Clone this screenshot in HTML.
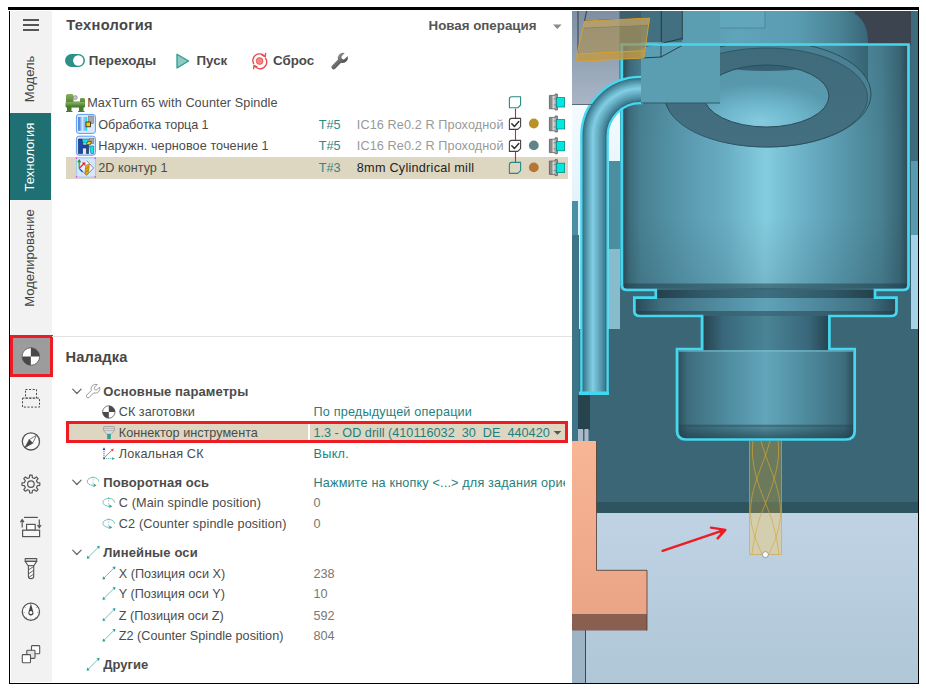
<!DOCTYPE html>
<html lang="ru">
<head>
<meta charset="utf-8">
<title>Технология</title>
<style>
*{box-sizing:border-box;margin:0;padding:0}
html,body{width:926px;height:689px;background:#fff;overflow:hidden}
body{font-family:"Liberation Sans",sans-serif;font-size:12px;color:#4b4b4b;position:relative}
.abs{position:absolute}
#topbar{left:8px;top:7px;width:911px;height:3px;background:#000}
#bl{left:9px;top:11px;width:1px;height:673px;background:#000}
#br{left:918px;top:10px;width:1px;height:674px;background:#000}
#bb{left:9px;top:683px;width:910px;height:1px;background:#000}
#side{left:11px;top:11px;width:41px;height:671px;background:#f2f2f2}
.vt{position:absolute;left:10px;width:42px;display:flex;align-items:center;justify-content:center}
.vt span{display:block;transform:rotate(-90deg);white-space:nowrap;font-size:12px;color:#444}
#tabact{left:10px;top:113px;width:40.5px;height:87px;background:#1f7073}
.t{position:absolute;white-space:nowrap;line-height:20px;height:20px}
.b{font-weight:bold}
.t i{color:transparent;font-style:normal}
.h14{font-size:14px;font-weight:bold;color:#3f3f3f}
.h13{font-size:13px;font-weight:bold;color:#4b4b4b}
.teal{color:#2a8a8a}
.gray{color:#999}
.num{color:#777}
.val{color:#1f7f80}
svg{position:absolute;overflow:visible}
.vtx{transform:translate(-50%,-50%) rotate(-90deg);white-space:nowrap;font-size:13px;color:#444;line-height:14px}
</style>
</head>
<body>
<!-- frame -->
<div class="abs" id="topbar"></div>
<div class="abs" id="bl"></div>
<div class="abs" id="br"></div>
<div class="abs" id="bb"></div>

<!-- SIDEBAR -->
<div class="abs" id="side"></div>
<div class="abs" id="tabact"></div>

<svg style="left:0;top:0" width="60" height="689" viewBox="0 0 60 689">
 <g fill="#555"><rect x="23" y="19" width="16" height="2"/><rect x="23" y="24" width="16" height="2"/><rect x="23" y="29" width="16" height="2"/></g>
</svg>
<div class="abs vtx" style="left:30px;top:78.7px">Модель</div>
<div class="abs vtx" style="left:30px;top:156.7px;color:#fff">Технология</div>
<div class="abs vtx" style="left:30px;top:258.3px">Моделирование</div>
<!-- active icon -->
<div class="abs" style="left:10px;top:335px;width:42.5px;height:42px;background:#9c9c9c;border:3px solid #ed1c24"></div>

<svg style="left:0;top:0" width="60" height="689" viewBox="0 0 60 689">
 <!-- active: target -->
 <circle cx="30.85" cy="356.5" r="8.8" fill="#fff" stroke="#555" stroke-width="0.8"/>
 <path d="M30.85 356.5 V347.7 A8.8 8.8 0 0 1 39.65 356.5Z M30.85 356.5 V365.3 A8.8 8.8 0 0 1 22.05 356.5Z" fill="#484848"/>
 <!-- dashed -->
 <g fill="none" stroke="#444" stroke-width="1" stroke-dasharray="2 1.6">
  <rect x="25.5" y="389.5" width="11" height="8.6"/>
  <rect x="22.5" y="398.1" width="17" height="9"/>
 </g>
 <!-- compass -->
 <circle cx="30.9" cy="441.4" r="8.6" fill="#fafafa" stroke="#555" stroke-width="1.3"/>
 <path d="M36.6 435.2 L32.6 443.2 L29.2 439.7Z" fill="#fff" stroke="#555" stroke-width="0.8" stroke-linejoin="round"/>
 <path d="M25.0 447.6 L29.2 439.7 L32.6 443.2Z" fill="#444" stroke="#444" stroke-width="0.8" stroke-linejoin="round"/>
 <!-- gear -->
 <path d="M29.70 475.18 L32.10 475.18 L32.44 477.68 L34.35 478.47 L36.36 476.95 L38.05 478.64 L36.53 480.65 L37.32 482.56 L39.82 482.90 L39.82 485.30 L37.32 485.64 L36.53 487.55 L38.05 489.56 L36.36 491.25 L34.35 489.73 L32.44 490.52 L32.10 493.02 L29.70 493.02 L29.36 490.52 L27.45 489.73 L25.44 491.25 L23.75 489.56 L25.27 487.55 L24.48 485.64 L21.98 485.30 L21.98 482.90 L24.48 482.56 L25.27 480.65 L23.75 478.64 L25.44 476.95 L27.45 478.47 L29.36 477.68Z" fill="none" stroke="#555" stroke-width="1.2" stroke-linejoin="round"/>
 <circle cx="30.9" cy="484.1" r="3.3" fill="none" stroke="#555" stroke-width="1.2"/>
 <!-- setup -->
 <g fill="none" stroke="#555" stroke-width="1.2">
  <path d="M24 517.4 H37.8"/>
  <path d="M22.2 527.6 V520 M20.4 522.2 L22.2 519.6 L24 522.2"/>
  <path d="M39.3 519.6 V527 M37.5 525 L39.3 527.6 L41.1 525"/>
  <rect x="26.6" y="524.4" width="8.6" height="5.8" fill="#fff"/>
  <rect x="22.6" y="530.2" width="17" height="6.4" fill="#f6f6f6"/>
 </g>
 <!-- mill -->
 <g fill="#f6f6f6" stroke="#555" stroke-width="1.1" stroke-linejoin="round">
  <path d="M25.2 558.6 H36.7 V561.4 H25.2Z"/>
  <path d="M25.2 561.4 H36.7 L33.8 565.8 H28.2Z"/>
  <path d="M28.4 565.8 H33.7 V576.4 Q33.7 578.6 31 578.6 Q28.4 578.6 28.4 576.4Z"/>
  <path d="M28.4 570 L33.7 566.4 M28.4 574 L33.7 570.2 M28.6 577.6 L33.7 574" fill="none" stroke-width="0.9"/>
 </g>
 <!-- gauge -->
 <circle cx="30.9" cy="611.7" r="8.6" fill="#fafafa" stroke="#555" stroke-width="1.3"/>
 <g fill="#999">
  <circle cx="25.2" cy="607.5" r="0.5"/><circle cx="36.6" cy="607.5" r="0.5"/><circle cx="24.2" cy="612.6" r="0.5"/><circle cx="37.6" cy="612.6" r="0.5"/><circle cx="26.2" cy="617.2" r="0.5"/><circle cx="35.6" cy="617.2" r="0.5"/><circle cx="30.9" cy="618.8" r="0.5"/>
 </g>
 <path d="M30.9 603.6 L33.3 612 A2.6 2.6 0 1 1 28.5 612Z" fill="#444"/>
 <circle cx="30.9" cy="612.6" r="1.5" fill="#fff"/>
 <!-- squares -->
 <g fill="#fff" stroke="#555" stroke-width="1.1">
  <rect x="31.5" y="645.6" width="8.2" height="8.2" rx="0.8"/>
  <rect x="26.8" y="650.2" width="8.2" height="8.2" rx="0.8" fill="#e4e4e4"/>
  <rect x="22.3" y="654.6" width="8.2" height="8.2" rx="0.8"/>
 </g>
</svg>



<!-- TOP PANEL -->
<div class="t b" style="left:66.3px;top:14.92px;font-size:14.67px;color:#474747;letter-spacing:0.3px;">Технология</div>
<div class="t b" style="left:428.5px;top:16.08px;font-size:13.33px;color:#555">Новая операция</div>
<div class="t b" style="left:88.8px;top:51.28px;font-size:13.33px;color:#4b4b4b">Переходы</div>
<div class="t b" style="left:196.5px;top:51.28px;font-size:13.33px;color:#4b4b4b">Пуск</div>
<div class="t b" style="left:273px;top:51.28px;font-size:13.33px;color:#4b4b4b">Сброс</div>
<div class="abs" style="left:65.5px;top:157px;width:502px;height:21.6px;background:#ddd6c0"></div>
<div class="t " style="left:87.2px;top:92.91px;font-size:12.67px;letter-spacing:0.1px;">MaxTurn 65 with Counter Spindle</div>
<div class="t " style="left:98.3px;top:114.61px;font-size:12.67px;letter-spacing:-0.1px;">Обработка торца 1</div>
<div class="t " style="left:98.3px;top:136.11px;font-size:12.67px;letter-spacing:0.07px;">Наружн. черновое точение 1</div>
<div class="t " style="left:98.3px;top:158.11px;font-size:12.67px;">2D контур 1</div>
<div class="t teal" style="left:318.8px;top:114.61px;font-size:12.67px;">T#5</div>
<div class="t teal" style="left:318.8px;top:136.11px;font-size:12.67px;">T#5</div>
<div class="t teal" style="left:318.8px;top:158.11px;font-size:12.67px;">T#3</div>
<div class="t gray" style="left:356.8px;top:114.61px;font-size:12.67px;letter-spacing:0.1px;">IC16 Re0.2 R Проходной</div>
<div class="t gray" style="left:356.8px;top:136.11px;font-size:12.67px;letter-spacing:0.1px;">IC16 Re0.2 R Проходной</div>
<div class="t " style="left:356.8px;top:158.11px;font-size:12.67px;color:#222;letter-spacing:0.25px;">8mm Cylindrical mill</div>
<svg style="left:0;top:0" width="572" height="200" viewBox="0 0 572 200">
<defs>
 <linearGradient id="gcyl" x1="0" y1="0" x2="1" y2="0"><stop offset="0" stop-color="#2a6ad0"/><stop offset="0.6" stop-color="#cfe6ff"/><stop offset="1" stop-color="#7ab0f0"/></linearGradient>
 <linearGradient id="ggrn" x1="0" y1="0" x2="0" y2="1"><stop offset="0" stop-color="#86b45c"/><stop offset="1" stop-color="#3f6e28"/></linearGradient>
 <linearGradient id="gchk" x1="0" y1="0" x2="1" y2="0"><stop offset="0" stop-color="#707070"/><stop offset="0.5" stop-color="#d8d8d8"/><stop offset="1" stop-color="#808080"/></linearGradient>
</defs>
<!-- toggle -->
<rect x="65" y="54" width="20" height="13" rx="6.5" fill="#2a9088"/>
<circle cx="78.3" cy="60.5" r="5.2" fill="#fff"/>
<!-- play -->
<path d="M177 54.2 L188.6 61 L177 68Z" fill="#8ccac2" stroke="#2f9a90" stroke-width="1.3" stroke-linejoin="round"/>
<!-- reset -->
<g fill="none" stroke="#ea4a4a" stroke-width="1.4" stroke-linecap="round">
 <path d="M253.6 63.5 A6.6 6.6 0 0 1 264.5 56.2"/>
 <path d="M265.6 58.4 A6.6 6.6 0 0 1 254.6 65.8"/>
 <path d="M262.2 55.2 L265.2 56.6 L265.6 53.4"/>
 <path d="M257 66.9 L254 65.5 L253.6 68.6"/>
</g>
<circle cx="259.6" cy="61" r="3.4" fill="#f08a8a" stroke="#ea4a4a" stroke-width="0.8"/>
<!-- wrench -->
<g transform="translate(342.8 57.9) rotate(45)">
 <linearGradient id="gwr" x1="0" y1="0" x2="1" y2="0"><stop offset="0" stop-color="#8c8c8c"/><stop offset="1" stop-color="#4c4c4c"/></linearGradient>
 <path d="M-2.1 -4.8 A5.3 5.3 0 0 0 -2.2 4.6 L-2.2 13 A2.2 2.2 0 0 0 2.2 13 L2.2 4.6 A5.3 5.3 0 0 0 2.1 -4.8 L2.1 -1 A2.1 2.1 0 0 1 -2.1 -1Z" fill="url(#gwr)"/>
</g>
<!-- dropdown arrow -->
<path d="M553 24.5 H561.6 L557.3 29Z" fill="#8a8a8a"/>
<!-- machine icon -->
<g>
 <path d="M66 101 V95.5 Q66 94 68 94 H72 Q73.5 94 73.5 96 V101.5 H80 V99 Q80 98 81.5 98 H83.5 Q85 98 85 99.5 V107 H66Z" fill="url(#ggrn)"/>
 <rect x="65.5" y="102" width="19.5" height="5.5" rx="1" fill="url(#ggrn)"/>
 <path d="M67 107 H71.5 V111 H72.5 V112 H66 V111 H67Z M79 107 H83.5 V111 H84.5 V112 H78 V111 H79Z" fill="#4a7a30"/>
 <circle cx="75.3" cy="97.6" r="2" fill="#c8c8c8" stroke="#777" stroke-width="0.6"/>
</g>
<!-- op icon 1 -->
<rect x="76.4" y="114.4" width="19" height="19" rx="2.5" fill="#dbe9ff" stroke="#5a9cf8" stroke-width="1"/>
<rect x="78.2" y="117" width="7" height="13.8" fill="url(#gcyl)"/>
<rect x="85.2" y="117" width="2" height="13.8" fill="#18e0e8"/>
<rect x="88.4" y="116" width="5" height="7.6" fill="#a8a8a8" stroke="#666" stroke-width="0.5"/>
<rect x="86" y="122" width="4.4" height="4.8" fill="#ffcc00" stroke="#222" stroke-width="0.8"/>
<!-- op icon 2 -->
<rect x="76.4" y="136.2" width="19" height="19" rx="2.5" fill="#dbe9ff" stroke="#5a9cf8" stroke-width="1"/>
<path d="M78.4 139 H82 L83 145 H88.5 V153.6 H86.5 V148 H82.5 V153.6 H78.4Z" fill="#1848b0" stroke="#0a1e50" stroke-width="0.6"/>
<path d="M82 139 H88.8 L87.4 143 H83Z M89.5 146 H93.6 V153.6 H91Z" fill="#18e0e8" stroke="#0a5060" stroke-width="0.5"/>
<rect x="89.4" y="138.4" width="4.4" height="5" fill="#a8a8a8" stroke="#666" stroke-width="0.5"/>
<path d="M86.6 143.4 L88.2 141.4 H91.4 L90.4 144.6 H86.6Z" fill="#ffcc00" stroke="#222" stroke-width="0.6"/>
<!-- op icon 3 -->
<rect x="76.4" y="158" width="19" height="19" fill="#d6e6fa" stroke="#9ec4f4" stroke-width="0.8"/>
<g fill="#ff30ff"><rect x="75.8" y="157.4" width="1.4" height="1.4"/><rect x="94.6" y="157.4" width="1.4" height="1.4"/><rect x="75.8" y="176.2" width="1.4" height="1.4"/><rect x="94.6" y="176.2" width="1.4" height="1.4"/></g>
<path d="M86.6 160.6 L93.6 168 L86.6 175.4 L81.4 170" fill="#eef4fc" stroke="#666" stroke-width="0.7"/>
<path d="M79.2 168.4 V160.4 M77.8 162.2 L79.2 160 L80.6 162.2" fill="none" stroke="#18a020" stroke-width="1.1"/>
<path d="M79.4 168.2 L84.6 163 M82.4 163 H84.8 V165.4" fill="none" stroke="#e82020" stroke-width="1.1"/>
<path d="M79.4 168.6 L82.6 172" fill="none" stroke="#2040e0" stroke-width="1.2"/>
<path d="M85.6 165.4 L89.4 164 L88.6 173 L86.6 175 L84.8 173.4Z" fill="#e0a818" stroke="#8a6410" stroke-width="0.5"/>
<path d="M85.4 169 L88.8 167 M85.2 172 L88.6 170" stroke="#8a6410" stroke-width="0.6"/>
<!-- red dashes -->
<path d="M515.5 108.6 V118 M515.5 130 V140.2 M515.5 151.8 V162" stroke="#f01818" stroke-width="1.1"/>
<!-- boxes -->
<g fill="#fff" stroke-width="1.1" stroke-linejoin="round">
 <path d="M511.6 96.8 H520.6 V105 L517.8 107.8 H509.4 V99 Q509.4 96.8 511.6 96.8Z" stroke="#2a8888"/>
 <path d="M511.6 118.4 H520.6 V126.6 L517.8 129.4 H509.4 V120.6 Q509.4 118.4 511.6 118.4Z" stroke="#444"/>
 <path d="M511.6 140.4 H520.6 V148.6 L517.8 151.4 H509.4 V142.6 Q509.4 140.4 511.6 140.4Z" stroke="#444"/>
 <path d="M511.6 162.4 H520.6 V170.6 L517.8 173.4 H509.4 V164.6 Q509.4 162.4 511.6 162.4Z" stroke="#2a8888" fill="#ddd6c0"/>
</g>
<g fill="none" stroke="#333" stroke-width="1.5" stroke-linecap="round" stroke-linejoin="round">
 <path d="M511.8 123.8 L514.4 126.4 L518.8 121.6"/>
 <path d="M511.8 145.8 L514.4 148.4 L518.8 143.6"/>
</g>
<!-- dots -->
<circle cx="533.8" cy="123.5" r="4.9" fill="#ba9028"/>
<circle cx="533.8" cy="145.4" r="4.9" fill="#5f8686"/>
<circle cx="533.8" cy="167.4" r="4.9" fill="#b87636"/>
<!-- chuck icons -->
<g id="chk">
 <path d="M549.4 95.4 H555 V94 H557.4 V110 H555 V108.8 H549.4Z" fill="url(#gchk)" stroke="#555" stroke-width="0.7"/>
 <path d="M551.8 95.4 V108.8 M553.6 99 H557 M553.6 105 H557" stroke="#666" stroke-width="0.6" fill="none"/>
 <rect x="556.4" y="97.6" width="8.2" height="9.4" fill="#00e8e0" stroke="#0a8a88" stroke-width="0.8"/>
</g>
<use href="#chk" y="22"/><use href="#chk" y="43.8"/><use href="#chk" y="65.6"/>
</svg>



<!-- BOTTOM PANEL -->
<div class="abs" style="left:52px;top:336px;width:520px;height:1px;background:#e2e2e2"></div>
<div class="t b" style="left:65.5px;top:347.32px;font-size:14.67px;color:#474747;letter-spacing:0.15px;">Наладка</div>
<div class="abs" style="left:65.7px;top:421px;width:502px;height:21.5px;background:#ddd6c0;border:3px solid #ed1c24"></div>
<div class="abs" style="left:308px;top:424px;width:2px;height:15.5px;background:#fff"></div>
<div class="t b" style="left:103.3px;top:381.50px;font-size:13px;letter-spacing:0.1px;">Основные параметры</div>
<div class="t " style="left:118.8px;top:402.41px;font-size:12.67px;">СК заготовки</div>
<div class="t " style="left:118.8px;top:422.91px;font-size:12.67px;">Коннектор инструмента</div>
<div class="t " style="left:118.8px;top:444.01px;font-size:12.67px;letter-spacing:0.15px;">Локальная СК</div>
<div class="t b" style="left:103.3px;top:472.50px;font-size:13px;letter-spacing:0.12px;">Поворотная ось</div>
<div class="t " style="left:118.8px;top:493.01px;font-size:12.67px;letter-spacing:0.12px;">C (Main spindle position)</div>
<div class="t " style="left:118.8px;top:514.11px;font-size:12.67px;letter-spacing:0.13px;">C2 (Counter spindle position)</div>
<div class="t b" style="left:103.3px;top:542.50px;font-size:13px;letter-spacing:0.13px;">Линейные оси</div>
<div class="t " style="left:118.8px;top:564.11px;font-size:12.67px;">X (Позиция оси X)</div>
<div class="t " style="left:118.8px;top:584.41px;font-size:12.67px;">Y (Позиция оси Y)</div>
<div class="t " style="left:118.8px;top:605.61px;font-size:12.67px;">Z (Позиция оси Z)</div>
<div class="t " style="left:118.8px;top:626.31px;font-size:12.67px;">Z2 (Counter Spindle position)</div>
<div class="t b" style="left:103.3px;top:655.00px;font-size:13px;">Другие</div>
<div class="t val" style="left:313.5px;top:402.41px;font-size:12.67px;letter-spacing:0.17px;">По предыдущей операции</div>
<div class="t val" style="left:313.5px;top:422.91px;font-size:12.67px;">1.3 - OD drill (410116032<i>_</i>30<i>_</i>DE<i>_</i>440420</div>
<div class="t val" style="left:313.5px;top:444.01px;font-size:12.67px;letter-spacing:0.3px;">Выкл.</div>
<div class="t val" style="left:313.5px;top:472.61px;font-size:12.67px;width:251px;overflow:hidden;letter-spacing:0.16px">Нажмите на кнопку &lt;...&gt; для задания ориентации</div>
<div class="t num" style="left:313.5px;top:493.01px;font-size:12.67px;">0</div>
<div class="t num" style="left:313.5px;top:514.11px;font-size:12.67px;">0</div>
<div class="t num" style="left:313.5px;top:564.11px;font-size:12.67px;">238</div>
<div class="t num" style="left:313.5px;top:584.41px;font-size:12.67px;">10</div>
<div class="t num" style="left:313.5px;top:605.61px;font-size:12.67px;">592</div>
<div class="t num" style="left:313.5px;top:626.31px;font-size:12.67px;">804</div>
<svg style="left:0;top:330px" width="572" height="353" viewBox="0 330 572 353">
<path d="M72.7 389.2 L76.9 393.5 L81.10000000000001 389.2" fill="none" stroke="#666" stroke-width="1.2" stroke-linecap="round" stroke-linejoin="round"/>
<path d="M72.7 480.2 L76.9 484.5 L81.10000000000001 480.2" fill="none" stroke="#666" stroke-width="1.2" stroke-linecap="round" stroke-linejoin="round"/>
<path d="M72.7 550.2 L76.9 554.5 L81.10000000000001 550.2" fill="none" stroke="#666" stroke-width="1.2" stroke-linecap="round" stroke-linejoin="round"/>
<g transform="translate(95.4 388.8) rotate(45)">
 <path d="M-1.8 -4.2 A4.6 4.6 0 0 0 -1.7 4.1 L-1.7 10.4 A1.7 1.7 0 0 0 1.7 10.4 L1.7 4.1 A4.6 4.6 0 0 0 1.8 -4.2 L1.8 -0.8 A1.8 1.8 0 0 1 -1.8 -0.8Z" fill="#fff" stroke="#8a8a8a" stroke-width="0.8"/>
</g>
<circle cx="108.8" cy="412" r="6.2" fill="#fff" stroke="#555" stroke-width="0.8"/>
<path d="M108.8 412 V405.8 A6.2 6.2 0 0 1 115 412Z M108.8 412 V418.2 A6.2 6.2 0 0 1 102.6 412Z" fill="#4a4a4a"/>
<path d="M104 426.6 H113.8 Q114.4 426.6 114.4 427.4 V430 Q114.4 431.4 112.6 432.6 L111 434.2 H107 L105.4 432.6 Q103.6 431.4 103.6 430 V427.4 Q103.6 426.6 104 426.6Z" fill="#dcdcdc" stroke="#8c8c8c" stroke-width="0.7"/>
<path d="M104 428.6 H114 M104.4 430.6 H113.6" stroke="#9a9a9a" stroke-width="0.6"/>
<rect x="107.2" y="434" width="3.6" height="5.2" fill="#2aa098"/>
<g fill="none" stroke-width="0.8">
 <path d="M104 458 V449.4" stroke="#2030e0" stroke-dasharray="1.2 0.8"/>
 <path d="M102.6 450 L104 447.2 L105.4 450Z" fill="#2030e0" stroke="none"/>
 <path d="M104.6 457.4 L112.4 449.8" stroke="#f04030"/>
 <path d="M113.8 448.4 L112.8 451.4 L110.8 449.4Z" fill="#f04030" stroke="none"/>
 <path d="M104 458.6 H112" stroke="#3aa4a0" stroke-dasharray="1.2 0.8"/>
 <path d="M114.8 458.6 L112 457.2 V460Z" fill="#3aa4a0" stroke="none"/>
 <rect x="103.2" y="457.6" width="1.6" height="1.6" fill="#444" stroke="none"/>
</g>
<path d="M553.6 431 H561.4 L557.5 434.8Z" fill="#555"/>
<g transform="translate(93 481.4)" fill="none" stroke="#62bcb8" stroke-width="0.9">
 <path d="M0 -5.2 V6.2" stroke-dasharray="1.5 1.5" stroke="#bcbcbc" stroke-width="1"/>
 <path d="M5.8 0.3 A5.8 3.9 0 1 0 0 3.9"/>
 <path d="M0.6 2.2 L3.6 4 L0.6 5.6Z" fill="#2aa39d" stroke="none"/>
</g>
<g transform="translate(108.7 502.3)" fill="none" stroke="#62bcb8" stroke-width="0.9">
 <path d="M0 -5.2 V6.2" stroke-dasharray="1.5 1.5" stroke="#bcbcbc" stroke-width="1"/>
 <path d="M5.8 0.3 A5.8 3.9 0 1 0 0 3.9"/>
 <path d="M0.6 2.2 L3.6 4 L0.6 5.6Z" fill="#2aa39d" stroke="none"/>
</g>
<g transform="translate(108.7 523.4)" fill="none" stroke="#62bcb8" stroke-width="0.9">
 <path d="M0 -5.2 V6.2" stroke-dasharray="1.5 1.5" stroke="#bcbcbc" stroke-width="1"/>
 <path d="M5.8 0.3 A5.8 3.9 0 1 0 0 3.9"/>
 <path d="M0.6 2.2 L3.6 4 L0.6 5.6Z" fill="#2aa39d" stroke="none"/>
</g>
<g transform="translate(93.3 552.3)">
 <path d="M-5 5 L5 -5" stroke="#62bcb8" stroke-width="0.9" fill="none"/>
 <path d="M6.5 -6.5 L5.9 -3.3 L3.3 -5.9Z M-6.5 6.5 L-5.9 3.3 L-3.3 5.9Z" fill="#2aa39d"/>
</g>
<g transform="translate(109 573)">
 <path d="M-5 5 L5 -5" stroke="#62bcb8" stroke-width="0.9" fill="none"/>
 <path d="M6.5 -6.5 L5.9 -3.3 L3.3 -5.9Z M-6.5 6.5 L-5.9 3.3 L-3.3 5.9Z" fill="#2aa39d"/>
</g>
<g transform="translate(109 593.4)">
 <path d="M-5 5 L5 -5" stroke="#62bcb8" stroke-width="0.9" fill="none"/>
 <path d="M6.5 -6.5 L5.9 -3.3 L3.3 -5.9Z M-6.5 6.5 L-5.9 3.3 L-3.3 5.9Z" fill="#2aa39d"/>
</g>
<g transform="translate(109 614.6)">
 <path d="M-5 5 L5 -5" stroke="#62bcb8" stroke-width="0.9" fill="none"/>
 <path d="M6.5 -6.5 L5.9 -3.3 L3.3 -5.9Z M-6.5 6.5 L-5.9 3.3 L-3.3 5.9Z" fill="#2aa39d"/>
</g>
<g transform="translate(109 635.3)">
 <path d="M-5 5 L5 -5" stroke="#62bcb8" stroke-width="0.9" fill="none"/>
 <path d="M6.5 -6.5 L5.9 -3.3 L3.3 -5.9Z M-6.5 6.5 L-5.9 3.3 L-3.3 5.9Z" fill="#2aa39d"/>
</g>
<g transform="translate(93.1 664.3)">
 <path d="M-5 5 L5 -5" stroke="#62bcb8" stroke-width="0.9" fill="none"/>
 <path d="M6.5 -6.5 L5.9 -3.3 L3.3 -5.9Z M-6.5 6.5 L-5.9 3.3 L-3.3 5.9Z" fill="#2aa39d"/>
</g>
</svg>



<!-- 3D VIEW -->
<svg style="left:572px;top:11px" width="346" height="672" viewBox="572 11 346 672">
<defs>
 <clipPath id="cv"><rect x="572" y="11" width="346" height="672"/></clipPath>
 <linearGradient id="gBody" gradientUnits="userSpaceOnUse" x1="624" y1="0" x2="907" y2="0">
  <stop offset="0" stop-color="#2d505d"/><stop offset="0.02" stop-color="#3d6c7c"/><stop offset="0.06" stop-color="#488091"/><stop offset="0.2" stop-color="#5797ac"/>
  <stop offset="0.36" stop-color="#69adc3"/><stop offset="0.5" stop-color="#84ccdf"/><stop offset="0.63" stop-color="#6db2c8"/>
  <stop offset="0.78" stop-color="#5797ac"/><stop offset="0.91" stop-color="#488091"/><stop offset="0.975" stop-color="#3a6777"/><stop offset="1" stop-color="#2d4f5b"/>
 </linearGradient>
 <linearGradient id="gNose" gradientUnits="userSpaceOnUse" x1="679" y1="0" x2="853" y2="0">
  <stop offset="0" stop-color="#2d515e"/><stop offset="0.05" stop-color="#3d6d7d"/><stop offset="0.28" stop-color="#4f8c9f"/>
  <stop offset="0.5" stop-color="#62a6bb"/><stop offset="0.72" stop-color="#4f8c9f"/><stop offset="0.95" stop-color="#3d6d7d"/><stop offset="1" stop-color="#2d515e"/>
 </linearGradient>
 <linearGradient id="gRim" x1="0" y1="0" x2="0" y2="1"><stop offset="0" stop-color="#1e3a44" stop-opacity="0.15"/><stop offset="1" stop-color="#1e3a44" stop-opacity="0.7"/></linearGradient>
 <linearGradient id="gNeck" gradientUnits="userSpaceOnUse" x1="704" y1="0" x2="828" y2="0">
  <stop offset="0" stop-color="#264550"/><stop offset="0.15" stop-color="#38667a"/><stop offset="0.5" stop-color="#4a8496"/>
  <stop offset="0.85" stop-color="#38667a"/><stop offset="1" stop-color="#264550"/>
 </linearGradient>
 <linearGradient id="gGroove" gradientUnits="userSpaceOnUse" x1="657" y1="0" x2="874" y2="0">
  <stop offset="0" stop-color="#22404a"/><stop offset="0.2" stop-color="#305867"/><stop offset="0.5" stop-color="#3d6f80"/>
  <stop offset="0.8" stop-color="#305867"/><stop offset="1" stop-color="#22404a"/>
 </linearGradient>
 <linearGradient id="gFlange" gradientUnits="userSpaceOnUse" x1="636" y1="0" x2="895" y2="0">
  <stop offset="0" stop-color="#2a4b58"/><stop offset="0.1" stop-color="#3f6f80"/><stop offset="0.5" stop-color="#5fa2b8"/>
  <stop offset="0.9" stop-color="#3f6f80"/><stop offset="1" stop-color="#2a4b58"/>
 </linearGradient>
 <linearGradient id="gPipe" gradientUnits="userSpaceOnUse" x1="581" y1="0" x2="607" y2="0">
  <stop offset="0" stop-color="#2a5e6e"/><stop offset="0.2" stop-color="#4a90a5"/><stop offset="0.5" stop-color="#80cce2"/>
  <stop offset="0.8" stop-color="#4a90a5"/><stop offset="1" stop-color="#2a5e6e"/>
 </linearGradient>
 <linearGradient id="gBg" x1="0" y1="0" x2="0" y2="1">
  <stop offset="0" stop-color="#c0d3e5"/><stop offset="1" stop-color="#afc7d7"/>
 </linearGradient>
 <linearGradient id="gGrayTL" x1="0" y1="0" x2="0" y2="1">
  <stop offset="0" stop-color="#7e8fa2"/><stop offset="1" stop-color="#a9b6c6"/>
 </linearGradient>
 <linearGradient id="gWhiteTL" x1="0" y1="0" x2="0" y2="1">
  <stop offset="0" stop-color="#f4fbff"/><stop offset="1" stop-color="#cfe6f4"/>
 </linearGradient>
 <linearGradient id="gSalmon" x1="0" y1="0" x2="0" y2="1">
  <stop offset="0" stop-color="#f8b696"/><stop offset="1" stop-color="#eaa486"/>
 </linearGradient>
 <radialGradient id="gHole" gradientUnits="userSpaceOnUse" cx="760" cy="122" r="78" gradientTransform="translate(0 61) scale(1 0.5)">
  <stop offset="0" stop-color="#86cee2"/><stop offset="0.5" stop-color="#70b9cf"/><stop offset="1" stop-color="#5a9db2"/>
 </radialGradient>
 <linearGradient id="gUpper" gradientUnits="userSpaceOnUse" x1="666" y1="0" x2="868" y2="0">
  <stop offset="0" stop-color="#5596ab"/><stop offset="0.35" stop-color="#60a4b9"/><stop offset="0.65" stop-color="#5a9cb1"/><stop offset="0.85" stop-color="#4a8496"/><stop offset="1" stop-color="#386676"/>
 </linearGradient>
 <linearGradient id="gBodyV" x1="0" y1="0" x2="0" y2="1"><stop offset="0" stop-color="#1e3a44" stop-opacity="0.08"/><stop offset="0.4" stop-color="#1e3a44" stop-opacity="0"/><stop offset="0.7" stop-color="#1e3a44" stop-opacity="0"/><stop offset="1" stop-color="#1e3a44" stop-opacity="0.14"/></linearGradient>
 <clipPath id="cBody"><rect x="624" y="46" width="283" height="242"/></clipPath>
</defs>
<g clip-path="url(#cv)">
 <!-- backgrounds -->
 <rect x="572" y="11" width="346" height="672" fill="#3a6676"/>
 <rect x="572" y="11" width="48" height="94" fill="url(#gGrayTL)"/>
 <rect x="572" y="105" width="48" height="224" fill="url(#gWhiteTL)"/>
 <rect x="619.5" y="11" width="22" height="68" fill="#3d5f6e"/>
 <!-- top-right dark -->
 <rect x="855" y="11" width="56" height="34" fill="#3c4450"/>
 <rect x="911" y="11" width="7" height="150" fill="#3c6c7c"/>
 <rect x="911" y="161" width="7" height="74" fill="#5a9ab0"/>
 <rect x="911" y="235" width="7" height="94" fill="#a4d2e6"/>
 <!-- left strips -->
 <rect x="609" y="161" width="11" height="88" fill="#4a8ea0"/>
 <rect x="609" y="249" width="11" height="80" fill="#86bccc"/>
 <rect x="572" y="201" width="6" height="34" fill="#4a90a2"/><rect x="572" y="235" width="7" height="206" fill="#3d7488"/>
 <!-- lower bg -->
 <rect x="572" y="502" width="346" height="11" fill="#2e5460"/>
 <rect x="572" y="513" width="346" height="170" fill="url(#gBg)"/>
 <rect x="572" y="630" width="13.5" height="53" fill="#9db3c6"/>
 <rect x="585" y="630" width="1" height="53" fill="#3a4a55"/>
  <!-- upper cyl above line -->
 <path d="M700 11 H846 Q868 15 868 43 V46 H700Z" fill="url(#gUpper)"/>
 <rect x="720" y="11" width="45" height="17" fill="#62a6bb"/>
 <path d="M720 28 H765 V11" fill="none" stroke="#4a8295" stroke-width="0.8"/>
 <!-- main body -->
 <rect x="624" y="46" width="283" height="242" fill="url(#gBody)"/>
 <g clip-path="url(#cBody)">
  <!-- upper cylinder -->
  <path d="M666 11 H845 Q868 14 868 42 V100 H666Z" fill="url(#gUpper)"/>
  <!-- ring -->
  <ellipse cx="767.5" cy="94" rx="103.5" ry="53" fill="#4c8598" stroke="#25424d" stroke-width="0.8"/>
  <ellipse cx="766.5" cy="97.5" rx="101" ry="49.5" fill="#436f80" stroke="#2a4a56" stroke-width="0.7"/>
  <ellipse cx="766.5" cy="96" rx="62.5" ry="31" fill="url(#gHole)" stroke="#2a4a56" stroke-width="1"/>
  <path d="M735 69.2 A62.5 31 0 0 1 798 69.2 A42 5 0 0 1 735 69.2Z" fill="#2f5564" opacity="0.8"/>
 </g>
 <rect x="624" y="46" width="283" height="242" fill="url(#gBodyV)"/>
 <!-- body bottom rim -->
 <rect x="624" y="283.5" width="283" height="4.5" fill="#1e3a44" opacity="0.5"/>
 <!-- groove -->
 <rect x="657" y="290" width="217" height="8" fill="url(#gGroove)"/>
 <!-- flange -->
 <rect x="636" y="298" width="259" height="18" fill="url(#gFlange)"/>
 <rect x="636" y="311" width="259" height="5" fill="#1e3a44" opacity="0.5"/>
 <!-- neck -->
 <rect x="704" y="316" width="124" height="34" fill="url(#gNeck)"/>
 <!-- nose -->
 <path d="M679 350 H853 V431 Q853 439 845 439 H687 Q679 439 679 431Z" fill="url(#gNose)"/>
 <path d="M679 424 H853 V431 Q853 439 845 439 H687 Q679 439 679 431Z" fill="url(#gRim)"/>
 <path d="M679 426 H853" stroke="#284a56" stroke-width="0.8"/>
 <rect x="679" y="350" width="174" height="2" fill="#7cc0d4" opacity="0.5"/>
 <!-- outline -->
 <path d="M621.7 44.5 H908.5 V285 Q908.5 290 903 290 H875 V297.6 H896.5 V311 Q896.5 316 891 316 H829.4 V349 H854.7 V431 Q854.7 439.5 846 439.5 H686 Q677 439.5 677 431 V349 H702 V316 H640 Q634.3 316 634.3 311 V297.6 H655.8 V290 H627 Q621.7 290 621.7 285Z" fill="none" stroke="#46d6ee" stroke-width="2.7" stroke-linejoin="miter"/>
 <!-- pipe -->
 <path d="M594.5 392 V136 A46 46 0 0 1 640.5 90 H643" fill="none" stroke="#48d8f0" stroke-width="28.6"/>
 <path d="M594.5 392 V136 A46.0 46.0 0 0 1 640.5 90.0 H643" fill="none" stroke="rgb(52, 112, 132)" stroke-width="24.0"/>
 <path d="M594.3222222222222 392 V136 A46.17777777777778 46.17777777777778 0 0 1 640.5 89.82222222222222 H643" fill="none" stroke="rgb(64, 126, 147)" stroke-width="21.6"/>
 <path d="M594.1444444444444 392 V136 A46.355555555555554 46.355555555555554 0 0 1 640.5 89.64444444444445 H643" fill="none" stroke="rgb(73, 138, 158)" stroke-width="19.1"/>
 <path d="M593.9666666666667 392 V136 A46.53333333333333 46.53333333333333 0 0 1 640.5 89.46666666666667 H643" fill="none" stroke="rgb(82, 148, 169)" stroke-width="16.7"/>
 <path d="M593.7888888888889 392 V136 A46.71111111111111 46.71111111111111 0 0 1 640.5 89.28888888888889 H643" fill="none" stroke="rgb(90, 158, 179)" stroke-width="14.2"/>
 <path d="M593.6111111111111 392 V136 A46.888888888888886 46.888888888888886 0 0 1 640.5 89.11111111111111 H643" fill="none" stroke="rgb(98, 168, 189)" stroke-width="11.8"/>
 <path d="M593.4333333333333 392 V136 A47.06666666666667 47.06666666666667 0 0 1 640.5 88.93333333333334 H643" fill="none" stroke="rgb(106, 177, 199)" stroke-width="9.3"/>
 <path d="M593.2555555555556 392 V136 A47.24444444444445 47.24444444444445 0 0 1 640.5 88.75555555555556 H643" fill="none" stroke="rgb(113, 186, 208)" stroke-width="6.9"/>
 <path d="M593.0777777777778 392 V136 A47.422222222222224 47.422222222222224 0 0 1 640.5 88.57777777777778 H643" fill="none" stroke="rgb(121, 195, 217)" stroke-width="4.4"/>
 <path d="M592.9 392 V136 A47.6 47.6 0 0 1 640.5 88.4 H643" fill="none" stroke="rgb(128, 204, 226)" stroke-width="2.0"/>
 <rect x="579" y="391.5" width="30" height="3.5" fill="#40d8f0"/>
 <!-- below pipe -->
 <rect x="578" y="395" width="12" height="35" fill="#27444e"/>
 <rect x="578" y="429" width="5" height="12" fill="#aab8c8"/><rect x="584.5" y="429" width="4" height="12" fill="#aab8c8"/>
 <!-- block in front -->
 <rect x="641" y="11" width="41" height="31" fill="#427080"/>
 <rect x="682" y="11" width="38" height="92" fill="#5b9eb2"/>
 <rect x="641" y="42" width="79" height="61" fill="#5b9eb2"/>
 <path d="M641 103 H720" stroke="#2f5a68" stroke-width="1"/>
 <path d="M661.3 11 V42 M682.3 11 V40 M641 47 L661 43.5 L682 38.5 M641 58 L661 57 L682 45.5 M661 43.5 V57" fill="none" stroke="#1a2a30" stroke-width="0.8"/>
 <path d="M640 44.5 H721" stroke="#46d6ee" stroke-width="2.7"/>
 <path d="M578 11 V54 M586.6 11 L584.5 21 M584.5 21 L649 18 M583 28 L648 25" fill="none" stroke="#1a2a30" stroke-width="0.8"/>
 <!-- insert -->
 <path d="M584.5 21 L649.6 18 L643.8 58 L576.8 61.4 L577 54Z" fill="#a8925c" fill-opacity="0.72"/>
 <path d="M584.5 21 L649.6 18 L648.6 25 L583.2 28Z" fill="#c8b078" fill-opacity="0.45"/>
 <path d="M577 54 L644.4 50.6 L643.8 58 L576.8 61.4Z" fill="#e0a428" fill-opacity="0.38"/>
 <path d="M584.5 21 L649.6 18 L643.8 58 L576.8 61.4 L577 54Z M577 54 L644.4 50.6" fill="none" stroke="#dca02a" stroke-width="0.9"/>
 <path d="M572 104.5 H592" stroke="#4a5560" stroke-width="0.8"/>
 <!-- salmon -->
 <path d="M572 441 H596.5 V570.3 H647 V614 H572Z" fill="url(#gSalmon)"/>
 <rect x="572" y="614" width="75" height="16.5" fill="#885f50"/>
 <path d="M596.5 441 V570.3 H647 V630.5" fill="none" stroke="#4a3a34" stroke-width="0.8"/>
 <!-- tool -->
 <rect x="749.5" y="441" width="32" height="61" fill="#6b7a5c"/>
 <rect x="749.5" y="502" width="32" height="11" fill="#606f55"/>
 <rect x="749.5" y="513" width="32" height="41.5" fill="#d4ceb0"/>
 <g fill="none" stroke="#d4a838" stroke-width="0.8" stroke-opacity="0.85">
  <path d="M749.5 441 V554.5 H781.5 V441"/>
  <path d="M753 441 C749 470 765 500 772 520 C776 535 778 545 779 554"/>
  <path d="M778 441 C782 470 766 500 759 520 C755 535 753 545 752 554"/>
  <path d="M770 441 C762 470 748 490 751 520 C753 535 758 545 762 554"/>
  <path d="M761 441 C769 470 783 490 780 520 C778 535 773 545 769 554"/>
 </g>
 <circle cx="765.4" cy="554.6" r="3" fill="#fff" stroke="#888" stroke-width="0.8"/>
 <!-- red arrow -->
 <g fill="none" stroke="#ec1c24" stroke-width="2.4" stroke-linecap="round" stroke-linejoin="round">
  <path d="M662.6 550.8 L722.5 530.6"/>
  <path d="M711 527.6 L725.4 529.9 L717.6 538.4"/>
 </g>
 <path d="M725.8 529.6 L718.6 528.4 L720.8 535Z" fill="#ec1c24"/>

</g>
</svg>


</body>
</html>
